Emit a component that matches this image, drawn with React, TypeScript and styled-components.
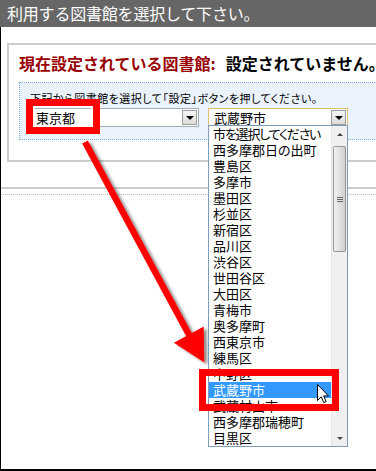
import { FC } from 'react';
import styled, { createGlobalStyle, css } from 'styled-components';

const GlobalStyle = createGlobalStyle`
    html,
    body {
        margin: 0;
        padding: 0;
        background: #fff;
    }

    body {
        font-family: 'Noto Sans CJK JP', 'Noto Sans', sans-serif;
        color: #000;
    }
`;

const PLACEHOLDER = '市を選択してください';

const CITIES = [
    PLACEHOLDER,
    '西多摩郡日の出町',
    '豊島区',
    '多摩市',
    '墨田区',
    '杉並区',
    '新宿区',
    '品川区',
    '渋谷区',
    '世田谷区',
    '大田区',
    '青梅市',
    '奥多摩町',
    '西東京市',
    '練馬区',
    '中野区',
    '武蔵野市',
    '武蔵村山市',
    '西多摩郡瑞穂町',
    '目黒区',
];

const SELECTED = '武蔵野市';

const Page = styled.div`
    position: relative;
    width: 376px;
    height: 471px;
    overflow: hidden;
    display: flex;
    flex-direction: column;
`;

const TitleBar = styled.div`
    flex-shrink: 0;
    height: 27px;
    padding-left: 7px;
    background: #666;
    color: #fff;
    font-size: 16px;
    line-height: 27px;
    letter-spacing: -0.2px;
    white-space: nowrap;
`;

const Content = styled.div`
    flex: 1;
    border-left: 1px solid #000;
    border-bottom: 2px solid #000;
    padding-top: 16px;
`;

const SettingsPanel = styled.section`
    width: 420px;
    margin-left: 6px;
    border: 2px solid #ccc;
    padding: 8px 10px 20px 10px;
`;

const CurrentLine = styled.h2`
    margin: 0;
    height: 20px;
    font-size: 16px;
    line-height: 20px;
    font-weight: 700;
    white-space: nowrap;
`;

const CurrentLabel = styled.span`
    color: #990000;
`;

const CurrentValue = styled.span`
    color: #000;
    margin-left: 10px;
`;

const ChooserBox = styled.div`
    margin-top: 9px;
    border: 1px dotted #7eaee0;
    background: #eaf2fb;
    padding: 8px 10px 12px 10px;
`;

const Hint = styled.p`
    margin: 0;
    font-size: 11px;
    line-height: 14px;
    font-feature-settings: 'palt';
    letter-spacing: 0.5px;
    white-space: nowrap;
`;

const SelectRow = styled.div`
    display: flex;
    gap: 9px;
    margin-top: 3px;
`;

interface ComboProps {
    $width: number;
    $focused?: boolean;
}

const Combo = styled.div<ComboProps>`
    position: relative;
    box-sizing: border-box;
    width: ${({ $width }) => $width}px;
    height: 19px;
    display: flex;
    align-items: center;
    background: #fff;
    border: 1px solid #a5acb5;
    ${({ $focused }) =>
        $focused &&
        css`
            border-color: #e2bf6c;
        `}
`;

const ComboValue = styled.span`
    flex: 1;
    padding-left: 5px;
    font-size: 13px;
    line-height: 17px;
    white-space: nowrap;
`;

const DropButton = styled.span`
    box-sizing: border-box;
    width: 15px;
    height: 15px;
    margin-right: 1px;
    display: flex;
    align-items: center;
    justify-content: center;
    border: 1px solid #9c9c9c;
    background: linear-gradient(#f6f6f6, #dcdcdc);

    &::after {
        content: '';
        border-left: 4px solid transparent;
        border-right: 4px solid transparent;
        border-top: 4px solid #000;
        margin-top: 1px;
    }
`;

interface HighlightProps {
    $left: number;
    $top: number;
    $w: number;
    $h: number;
    $mask?: boolean;
}

const Highlight = styled.div<HighlightProps>`
    position: absolute;
    z-index: 4;
    box-sizing: border-box;
    left: ${({ $left }) => $left}px;
    top: ${({ $top }) => $top}px;
    width: ${({ $w }) => $w}px;
    height: ${({ $h }) => $h}px;
    border: 7px solid #ff0000;
    pointer-events: none;
    ${({ $mask }) =>
        $mask &&
        css`
            box-shadow: inset 0 0 0 2px #fff;
        `}
`;

const ListBox = styled.div`
    position: absolute;
    z-index: 3;
    left: -1px;
    top: calc(100% - 1px);
    box-sizing: border-box;
    width: 140px;
    height: 322px;
    display: flex;
    background: #fff;
    border: 1px solid #7f9db9;
`;

const Options = styled.ul`
    flex: 1;
    margin: 0;
    padding: 0;
    list-style: none;
    overflow: hidden;
`;

interface OptionProps {
    $selected?: boolean;
    $placeholder?: boolean;
}

const Option = styled.li<OptionProps>`
    height: 16px;
    padding-left: 4px;
    font-size: 13px;
    line-height: 16px;
    font-feature-settings: 'palt';
    white-space: nowrap;
    overflow: hidden;
    ${({ $placeholder }) =>
        $placeholder &&
        css`
            letter-spacing: -1.2px;
        `}
    ${({ $selected }) =>
        $selected &&
        css`
            background: #3399ff;
            color: #fff;
        `}
`;

const ScrollBar = styled.div`
    width: 16px;
    display: flex;
    flex-direction: column;
    background: #f0f0f0;
    border-left: 1px solid #e4e4e4;
    box-sizing: border-box;
`;

const ScrollArrow = styled.span<{ $dir: 'up' | 'down' }>`
    height: 16px;
    display: flex;
    align-items: center;
    justify-content: center;

    &::after {
        content: '';
        border-left: 3px solid transparent;
        border-right: 3px solid transparent;
        ${({ $dir }) =>
            $dir === 'up'
                ? css`
                      border-bottom: 3px solid #444;
                  `
                : css`
                      border-top: 3px solid #444;
                  `}
    }
`;

const ScrollTrack = styled.div`
    flex: 1;
    padding: 4px 1px 0 1px;
`;

const Thumb = styled.div`
    box-sizing: border-box;
    height: 106px;
    display: flex;
    align-items: center;
    justify-content: center;
    border: 1px solid #979797;
    border-radius: 2px;
    background: linear-gradient(90deg, #f2f2f2, #dedede 60%, #cfcfcf);

    &::after {
        content: '';
        width: 6px;
        height: 5px;
        background: repeating-linear-gradient(#666 0 1px, transparent 1px 2px);
    }
`;

const Cursor = styled.svg`
    position: absolute;
    z-index: 5;
    left: 108px;
    top: 258px;
`;

const RuleSolid = styled.hr`
    margin: 25px 0 0 0;
    height: 2px;
    border: 0;
    background: #ccc;
`;

const RuleDotted = styled.hr`
    margin: 5px 0 0 0;
    height: 0;
    border: 0;
    border-top: 1px dotted #bbb;
`;

const ArrowLayer = styled.svg`
    position: absolute;
    left: 0;
    top: 0;
    z-index: 2;
    pointer-events: none;
`;

const PointerArrow: FC = () => (
    <ArrowLayer width='376' height='471' viewBox='0 0 376 471'>
        <defs>
            <filter id='arrowShadow' x='-20%' y='-20%' width='140%' height='140%'>
                <feDropShadow dx='3' dy='2' stdDeviation='1.6' floodColor='#000' floodOpacity='0.45' />
            </filter>
        </defs>
        <g filter='url(#arrowShadow)' fill='#ff0000'>
            <line x1='85' y1='142' x2='190.5' y2='337.5' stroke='#ff0000' strokeWidth='6.5' />
            <polygon points='173.9,342.8 203.7,326.4 204.3,362.6' />
        </g>
    </ArrowLayer>
);

const CityList: FC = () => (
    <ListBox>
        <Options>
            {CITIES.map((city) => (
                <Option
                    key={city}
                    $selected={city === SELECTED}
                    $placeholder={city === PLACEHOLDER}
                >
                    {city}
                </Option>
            ))}
        </Options>
        <ScrollBar>
            <ScrollArrow $dir='up' />
            <ScrollTrack>
                <Thumb />
            </ScrollTrack>
            <ScrollArrow $dir='down' />
        </ScrollBar>
        <Highlight $left={-10} $top={243} $w={140} $h={42} />
        <Cursor width='13' height='20' viewBox='0 0 13 20'>
            <path
                d='M0.5 0.5 L0.5 16.5 L4.3 12.8 L6.8 18.6 L9.2 17.6 L6.7 11.9 L11.5 11.9 Z'
                fill='#fff'
                stroke='#000'
                strokeWidth='1'
                strokeLinejoin='miter'
            />
        </Cursor>
    </ListBox>
);

const App: FC = () => (
    <>
        <GlobalStyle />
        <Page>
            <TitleBar>利用する図書館を選択して下さい。</TitleBar>
            <Content>
                <SettingsPanel>
                    <CurrentLine>
                        <CurrentLabel>現在設定されている図書館:</CurrentLabel>
                        <CurrentValue>設定されていません。</CurrentValue>
                    </CurrentLine>
                    <ChooserBox>
                        <Hint>下記から図書館を選択して「設定」ボタンを押してください。</Hint>
                        <SelectRow>
                            <Combo $width={169}>
                                <ComboValue>東京都</ComboValue>
                                <DropButton />
                                <Highlight $left={-5} $top={-10} $w={74} $h={35} $mask />
                            </Combo>
                            <Combo $width={140} $focused>
                                <ComboValue>武蔵野市</ComboValue>
                                <DropButton />
                                <CityList />
                            </Combo>
                        </SelectRow>
                    </ChooserBox>
                </SettingsPanel>
                <RuleSolid />
                <RuleDotted />
            </Content>
            <PointerArrow />
        </Page>
    </>
);

export default App;
